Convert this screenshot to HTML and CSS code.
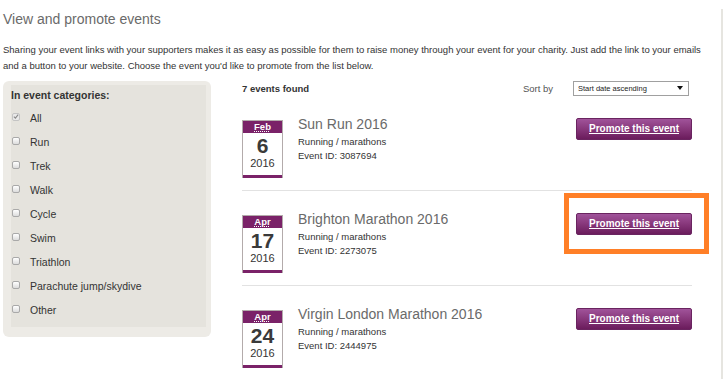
FILE: index.html
```html
<!DOCTYPE html>
<html lang="en">
<head>
    <meta charset="UTF-8">
    <title>View and promote events</title>
    <link rel="stylesheet" href="styles.css">
</head>
<body>
    <div class="page">
        <h1 class="page-title">View and promote events</h1>
        <p class="intro">Sharing your event links with your supporters makes it as easy as possible for them to raise money through your event for your charity. Just add the link to your emails and a button to your website. Choose the event you'd like to promote from the list below.</p>

        <div class="layout">
            <!-- Category filter -->
            <div class="filter">
                <div class="filter-inner">
                    <div class="filter-title">In event categories:</div>
                    <label class="cat"><span class="box checked"><svg width="7" height="7" viewBox="0 0 7 7"><path d="M1 3.6 L2.8 5.4 L6 1.4" fill="none" stroke="#8a8a8a" stroke-width="1.3"/></svg></span>All</label>
                    <label class="cat"><span class="box"></span>Run</label>
                    <label class="cat"><span class="box"></span>Trek</label>
                    <label class="cat"><span class="box"></span>Walk</label>
                    <label class="cat"><span class="box"></span>Cycle</label>
                    <label class="cat"><span class="box"></span>Swim</label>
                    <label class="cat"><span class="box"></span>Triathlon</label>
                    <label class="cat"><span class="box"></span>Parachute jump/skydive</label>
                    <label class="cat"><span class="box"></span>Other</label>
                </div>
            </div>

            <!-- Event list -->
            <div class="events">
                <div class="events-head">
                    <span class="count">7 events found</span>
                    <span class="sort-label">Sort by</span>
                    <div class="sort-select"><span>Start date ascending</span><span class="arrow"></span></div>
                </div>

                <div class="event">
                    <div class="cal">
                        <div class="cal-month"><abbr>Feb</abbr></div>
                        <div class="cal-day">6</div>
                        <div class="cal-year">2016</div>
                    </div>
                    <div class="event-info">
                        <div class="event-name">Sun Run 2016</div>
                        <div class="event-meta">Running / marathons</div>
                        <div class="event-meta">Event ID: 3087694</div>
                    </div>
                    <a class="promote" href="#">Promote this event</a>
                </div>

                <div class="event highlighted">
                    <div class="cal">
                        <div class="cal-month"><abbr>Apr</abbr></div>
                        <div class="cal-day">17</div>
                        <div class="cal-year">2016</div>
                    </div>
                    <div class="event-info">
                        <div class="event-name">Brighton Marathon 2016</div>
                        <div class="event-meta">Running / marathons</div>
                        <div class="event-meta">Event ID: 2273075</div>
                    </div>
                    <a class="promote" href="#">Promote this event</a>
                    <div class="callout"></div>
                </div>

                <div class="event">
                    <div class="cal">
                        <div class="cal-month"><abbr>Apr</abbr></div>
                        <div class="cal-day">24</div>
                        <div class="cal-year">2016</div>
                    </div>
                    <div class="event-info">
                        <div class="event-name">Virgin London Marathon 2016</div>
                        <div class="event-meta">Running / marathons</div>
                        <div class="event-meta">Event ID: 2444975</div>
                    </div>
                    <a class="promote" href="#">Promote this event</a>
                </div>
            </div>
        </div>
    </div>
</body>
</html>
```

FILE: styles.css
```css
/* Basic reset */
* {
    margin: 0;
    padding: 0;
    box-sizing: border-box;
}
body {
    font-family: 'Liberation Sans', Arial, sans-serif;
    color: #333333;
    background-color: #ffffff;
}
/* Page frame */
.page {
    width: 723px;
    min-height: 100vh;
    padding-left: 3px;
    border-right: 2px solid #e6e5e0;
}
.page-title {
    font-size: 14px;
    font-weight: 400;
    line-height: 20px;
    color: #6a6a6a;
    margin-top: 9px;
}
.intro {
    font-size: 9.5px;
    line-height: 16px;
    margin-top: 13px;
    padding-right: 12px;
}
.layout {
    display: flex;
    margin-top: 6px;
}
/* Filter panel */
.filter {
    width: 208px;
    flex-shrink: 0;
    align-self: flex-start;
    background-color: #edebe6;
    border-radius: 6px;
    padding: 4px 5px 10px 8px;
    margin-top: 1px;
}
.filter-inner {
    background-color: #e5e3dd;
    padding-bottom: 5px;
}
.filter-title {
    font-size: 10.5px;
    font-weight: 700;
    line-height: 21px;
}
.cat {
    display: flex;
    align-items: center;
    height: 24px;
    font-size: 10.5px;
}
.box {
    display: flex;
    align-items: center;
    justify-content: center;
    width: 8px;
    height: 8px;
    margin: 0 10px 3px 1px;
    border: 1px solid #a9a9a9;
    border-radius: 2px;
    background: linear-gradient(#ffffff, #dcdcdc);
}
.box.checked {
    border-color: #c4c4c4;
    background: #e9e9e9;
}
/* Events list */
.events {
    width: 450px;
    margin-left: 31px;
}
.events-head {
    display: flex;
    align-items: center;
    height: 16px;
}
.count {
    flex: 1;
    font-size: 9.5px;
    font-weight: 700;
}
.sort-label {
    font-size: 9.5px;
    color: #555555;
    margin-right: 20px;
}
.sort-select {
    display: flex;
    align-items: center;
    justify-content: space-between;
    width: 116px;
    height: 15px;
    margin-right: 3px;
    padding: 0 5px 0 4px;
    border: 1px solid #a0a0a0;
    font-size: 7.5px;
    color: #222222;
}
.arrow {
    width: 0;
    height: 0;
    border-left: 3px solid transparent;
    border-right: 3px solid transparent;
    border-top: 4px solid #111111;
}
.event {
    display: flex;
    align-items: flex-start;
    padding: 24px 0 12px;
    border-bottom: 1px solid #e2e2e2;
    position: relative;
}
/* Calendar badge */
.cal {
    display: flex;
    flex-direction: column;
    width: 41px;
    height: 58px;
    border: 1px solid #b3abab;
    border-bottom: none;
    text-align: center;
    flex-shrink: 0;
}
.cal-month {
    background-color: #7a2268;
    height: 12px;
    line-height: 12px;
    font-size: 9.5px;
    font-weight: 700;
    color: #ffffff;
}
.cal-month abbr {
    text-decoration: underline dotted;
    text-underline-offset: 1px;
}
.cal-day {
    font-size: 21px;
    font-weight: 700;
    line-height: 22px;
    margin-top: 2px;
    color: #3a3a3a;
}
.cal-year {
    font-size: 11px;
    line-height: 13px;
}
.cal::after {
    content: '';
    margin-top: auto;
    height: 3px;
    background-color: #7a2268;
}
.event-info {
    flex: 1;
    margin: -4px 0 0 15px;
}
.event-name {
    font-size: 14px;
    line-height: 16px;
    color: #6a6a6a;
    margin-bottom: 3px;
}
.event-meta {
    font-size: 9.5px;
    line-height: 14px;
}
/* Promote button */
.promote {
    display: block;
    width: 116px;
    height: 22px;
    line-height: 20px;
    margin-top: -2px;
    text-align: center;
    font-size: 10px;
    font-weight: 700;
    color: #ffffff;
    text-decoration: underline;
    background: linear-gradient(#a0539a, #8a3a7e 45%, #6b1c5c);
    border: 1px solid #6a2460;
    border-radius: 2px;
}
/* Annotation box around the highlighted button */
.callout {
    position: absolute;
    left: 322px;
    top: 2px;
    width: 145px;
    height: 61px;
    border: 5px solid #ff7f27;
}
```
